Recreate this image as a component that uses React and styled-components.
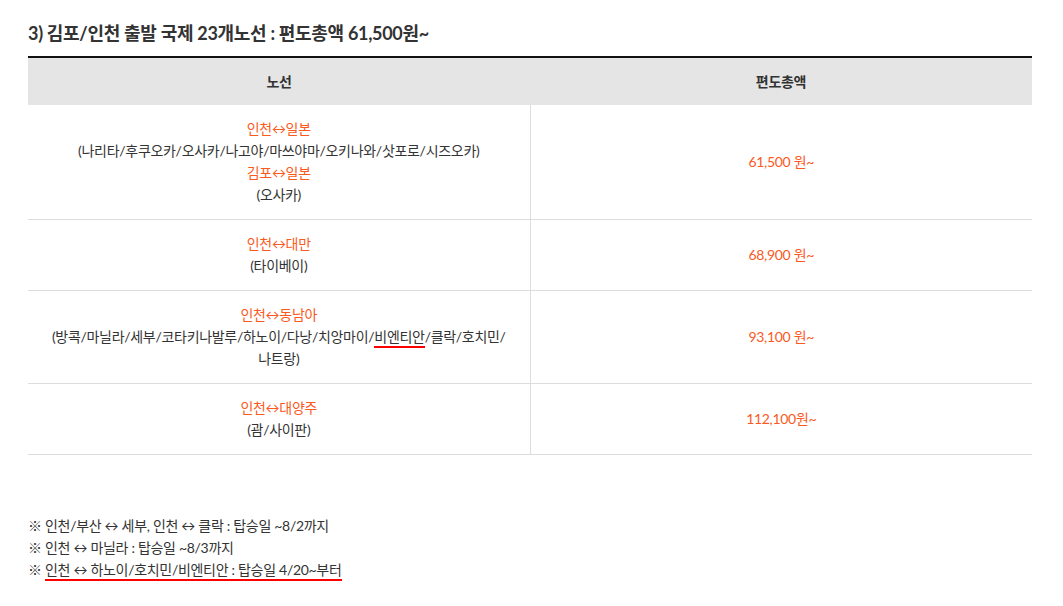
import React from 'react';
import styled, { createGlobalStyle } from 'styled-components';

const GlobalStyle = createGlobalStyle`
  body {
    margin: 0;
    background: #fff;
    font-family: Lato, "Noto Sans CJK KR", sans-serif;
    color: #333;
  }
`;

const ORANGE = '#fa5a1e';

const StyledPage = styled.section`
  padding: 20px 31px 0 28px;
`;

const StyledTitle = styled.h3`
  margin: 0 0 10px;
  font-size: 18px;
  font-weight: 700;
  line-height: 26px;
  color: #333;
  letter-spacing: -0.3px;
`;

const StyledTable = styled.table`
  width: 100%;
  border-collapse: collapse;
  table-layout: fixed;
  border-top: 2px solid #111;
  font-size: 14px;
  line-height: 22px;
`;

const StyledHead = styled.th`
  height: 47px;
  padding: 0;
  background: #e5e5e5;
  font-weight: 700;
  color: #333;
  text-align: center;
  letter-spacing: -0.3px;
`;

const StyledCell = styled.td`
  padding: 13px 10px 13px;
  border-bottom: 1px solid #ddd;
  text-align: center;
  vertical-align: middle;
  letter-spacing: -0.3px;

  & + & {
    border-left: 1px solid #ddd;
  }
`;

const StyledRoute = styled.div`
  color: ${ORANGE};
`;

const StyledCities = styled.div`
  color: #333;
`;

const StyledPrice = styled.span`
  color: ${ORANGE};
`;

const StyledMark = styled.span`
  border-bottom: 2px solid #f00;
  padding-bottom: 1px;
`;

const StyledNotes = styled.ul`
  list-style: none;
  margin: 60px 0 0;
  padding: 0;
  font-size: 14px;
  line-height: 22px;
  color: #333;
  letter-spacing: -0.3px;
`;

const rows = [
  {
    groups: [
      { route: '인천↔일본', cities: '(나리타/후쿠오카/오사카/나고야/마쓰야마/오키나와/삿포로/시즈오카)' },
      { route: '김포↔일본', cities: '(오사카)' }
    ],
    price: '61,500 원~'
  },
  {
    groups: [{ route: '인천↔대만', cities: '(타이베이)' }],
    price: '68,900 원~'
  },
  {
    groups: [
      {
        route: '인천↔동남아',
        cities: (
          <>
            (방콕/마닐라/세부/코타키나발루/하노이/다낭/치앙마이/<StyledMark>비엔티안</StyledMark>/클락/호치민/
            <br />
            나트랑)
          </>
        )
      }
    ],
    price: '93,100 원~'
  },
  {
    groups: [{ route: '인천↔대양주', cities: '(괌/사이판)' }],
    price: '112,100원~'
  }
];

export default function App() {
  return (
    <StyledPage>
      <GlobalStyle />
      <StyledTitle>3) 김포/인천 출발 국제 23개노선 : 편도총액 61,500원~</StyledTitle>
      <StyledTable>
        <thead>
          <tr>
            <StyledHead>노선</StyledHead>
            <StyledHead>편도총액</StyledHead>
          </tr>
        </thead>
        <tbody>
          {rows.map((row, i) => (
            <tr key={i}>
              <StyledCell>
                {row.groups.map((g, j) => (
                  <React.Fragment key={j}>
                    <StyledRoute>{g.route}</StyledRoute>
                    <StyledCities>{g.cities}</StyledCities>
                  </React.Fragment>
                ))}
              </StyledCell>
              <StyledCell>
                <StyledPrice>{row.price}</StyledPrice>
              </StyledCell>
            </tr>
          ))}
        </tbody>
      </StyledTable>
      <StyledNotes>
        <li>※ 인천/부산 ↔ 세부, 인천 ↔ 클락 : 탑승일 ~8/2까지</li>
        <li>※ 인천 ↔ 마닐라 : 탑승일 ~8/3까지</li>
        <li>※ <StyledMark>인천 ↔ 하노이/호치민/비엔티안 : 탑승일 4/20~부터</StyledMark></li>
      </StyledNotes>
    </StyledPage>
  );
}
